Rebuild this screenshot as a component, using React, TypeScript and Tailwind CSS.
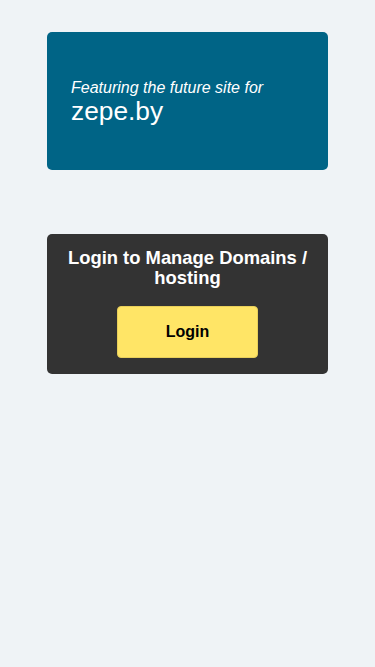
export default function App() {
  return (
    <div className="min-h-[667px] bg-[#eff3f6] pt-8" style={{ fontFamily: '"Liberation Sans", Arial, sans-serif' }}>
      <div className="mx-auto flex h-[138px] w-[281px] flex-col justify-center rounded-[5px] bg-[#006486] px-6 pt-[2px] text-white">
        <p className="text-[16px] italic leading-[18px]">Featuring the future site for</p>
        <p className="text-[26.3px] leading-[28px]">zepe.by</p>
      </div>
      <div className="mx-auto mt-16 flex w-[281px] flex-col items-center rounded-[5px] bg-[#333333] px-3 pb-4 pt-[14px] text-white">
        <h2 className="text-center text-[18.4px] font-bold leading-[20px]">Login to Manage Domains / hosting</h2>
        <button className="mt-[18px] h-[52px] w-[141px] rounded-[4px] border border-[#e8cf5a] bg-[#ffe566] text-[16px] font-bold text-black">
          Login
        </button>
      </div>
    </div>
  );
}
